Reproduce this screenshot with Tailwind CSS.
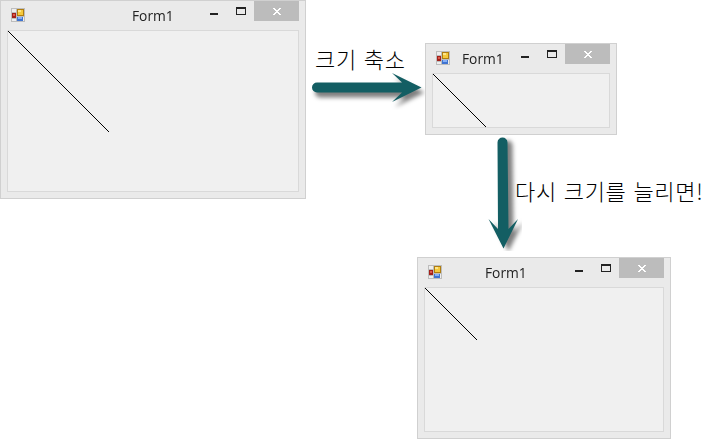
<!DOCTYPE html>
<html lang="ko">
<head>
<meta charset="utf-8">
<title>Form1</title>
<script src="https://cdn.jsdelivr.net/npm/@tailwindcss/browser@4"></script>
</head>
<body class="relative h-[447px] w-[716px] overflow-hidden bg-white font-['Open_Sans','Noto_Sans_CJK_KR',sans-serif]">

<svg class="hidden">
  <symbol id="app" viewBox="0 0 14 14">
    <rect width="14" height="14" fill="#bdbdbd"/>
    <path d="M1 1h4v3H1zM1 11h4v2H1zM12 9h1v4h-1z" fill="#eee"/>
    <rect x="1" y="5" width="4" height="5" fill="#a3201a"/>
    <rect x="2" y="6" width="2" height="2" fill="#df5a4a"/>
    <rect x="6" y="1" width="7" height="7" fill="#b07d10"/>
    <rect x="7" y="2" width="5" height="5" fill="#f5c93d"/>
    <rect x="7" y="2" width="3" height="2" fill="#fce58a"/>
    <rect x="6" y="9" width="6" height="4" fill="#3f74d1"/>
    <rect x="7" y="9" width="4" height="2" fill="#87b0f5"/>
  </symbol>
  <symbol id="close" viewBox="0 0 8 7">
    <path d="M0 0h2v1h1v1h2v-1h1v-1h2v1h-1v1h-1v1h-1v1h1v1h1v1h1v1h-2v-1h-1v-1h-2v1h-1v1h-2v-1h1v-1h1v-1h1v-1h-1v-1h-1v-1h-1z" fill="#fff"/>
  </symbol>
</svg>

<section class="absolute left-0 top-0 flex h-[199px] w-[306px] flex-col border border-[#d0d0d0] bg-[#eaeaea] px-1.5 pb-1.5">
  <header class="flex h-[29px] shrink-0 items-start">
    <svg class="ml-1 mt-[7px] size-3.5 shrink-0"><use href="#app"/></svg>
    <h1 class="ml-[107px] mt-1 w-[50px] origin-left scale-x-[0.92] text-[15px] leading-[21px] text-[#222]">Form1</h1>
    <div class="ml-auto flex items-start">
      <i class="mt-3 h-0.5 w-2 bg-[#222]"></i>
      <i class="ml-[18px] mr-2 mt-1.5 h-2 w-2.5 border border-t-2 border-[#222]"></i>
      <b class="flex h-5 w-[45px] justify-center bg-[#bcbcbc] pt-[7px]"><svg class="h-[7px] w-2"><use href="#close"/></svg></b>
    </div>
  </header>
  <main class="flex-1 border border-[#d9d9d9] bg-[#f0f0f0]"><svg class="size-[101px]" shape-rendering="crispEdges"><path d="M0 0L101 101" stroke="#000"/></svg></main>
</section>

<section class="absolute left-[425px] top-[43px] flex h-[92px] w-[192px] flex-col border border-[#d0d0d0] bg-[#eaeaea] px-1.5 pb-1.5">
  <header class="flex h-[29px] shrink-0 items-start">
    <svg class="ml-1 mt-[7px] size-3.5 shrink-0"><use href="#app"/></svg>
    <h1 class="ml-3 mt-1 w-[50px] origin-left scale-x-[0.92] text-[15px] leading-[21px] text-[#222]">Form1</h1>
    <div class="ml-auto flex items-start">
      <i class="mt-3 h-0.5 w-2 bg-[#222]"></i>
      <i class="ml-[18px] mr-2 mt-1.5 h-2 w-2.5 border border-t-2 border-[#222]"></i>
      <b class="flex h-5 w-[45px] justify-center bg-[#bcbcbc] pt-[7px]"><svg class="h-[7px] w-2"><use href="#close"/></svg></b>
    </div>
  </header>
  <main class="flex-1 border border-[#d9d9d9] bg-[#f0f0f0]"><svg class="size-[53px]" shape-rendering="crispEdges"><path d="M0 0L53 53" stroke="#000"/></svg></main>
</section>

<section class="absolute left-[417px] top-[257px] flex h-[182px] w-[254px] flex-col border border-[#d0d0d0] bg-[#eaeaea] px-1.5 pb-1.5">
  <header class="flex h-[29px] shrink-0 items-start">
    <svg class="ml-1 mt-[7px] size-3.5 shrink-0"><use href="#app"/></svg>
    <h1 class="ml-[43px] mt-1 w-[50px] origin-left scale-x-[0.92] text-[15px] leading-[21px] text-[#222]">Form1</h1>
    <div class="ml-auto flex items-start">
      <i class="mt-3 h-0.5 w-2 bg-[#222]"></i>
      <i class="ml-[18px] mr-2 mt-1.5 h-2 w-2.5 border border-t-2 border-[#222]"></i>
      <b class="flex h-5 w-[45px] justify-center bg-[#bcbcbc] pt-[7px]"><svg class="h-[7px] w-2"><use href="#close"/></svg></b>
    </div>
  </header>
  <main class="flex-1 border border-[#d9d9d9] bg-[#f0f0f0]"><svg class="size-[52px]" shape-rendering="crispEdges"><path d="M0 0L52 52" stroke="#000"/></svg></main>
</section>

<svg class="absolute left-[306px] top-[60px] h-[50px] w-[119px]" viewBox="306 60 119 50">
  <path class="drop-shadow-[3px_5px_2px_rgba(0,0,0,0.5)]" fill="#135e63" d="M317 82.500H402L392 73L421.500 87.500L392 102L402 92.500H317A5 5 0 0 1 317 82.500z"/>
</svg>
<svg class="absolute left-[480px] top-[135px] h-[116px] w-[42px]" viewBox="480 135 42 116">
  <path class="drop-shadow-[5px_3px_2px_rgba(0,0,0,0.5)]" fill="#135e63" d="M497.500 142.500A5 5 0 0 1 507.500 142.500L508.500 229L518 219L503.500 248.500L488.500 219L498 229z"/>
</svg>

<p class="absolute left-[315px] top-[43px] whitespace-nowrap font-['Noto_Sans_CJK_KR',sans-serif] text-[22px] font-light leading-[30px] tracking-[0.7px] text-black">크기 축소</p>
<p class="absolute left-[515px] top-[175px] whitespace-nowrap font-['Noto_Sans_CJK_KR',sans-serif] text-[22px] font-light leading-[30px] tracking-[0.7px] text-black">다시 크기를 늘리면!</p>
</body>
</html>
